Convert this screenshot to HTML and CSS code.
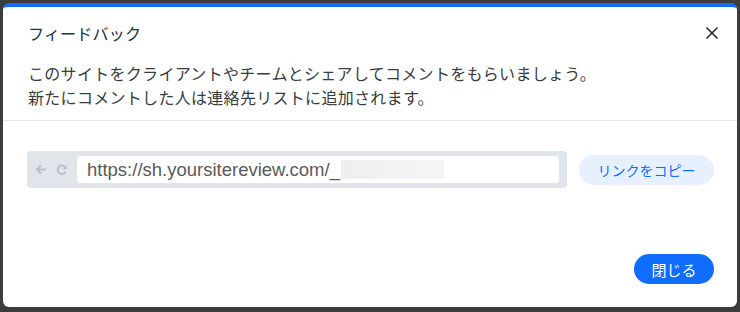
FILE: index.html
```html
<!DOCTYPE html>
<html lang="ja">
<head>
<meta charset="utf-8">
<link rel="stylesheet" href="styles.css">
</head>
<body>
<div class="dialog">
  <div class="header">
    <div class="title-row">
      <h1 class="title">フィードバック</h1>
      <button class="close" aria-label="閉じる">
        <svg width="14" height="14" viewBox="0 0 14 14"><path d="M1.5 1.5 L12.5 12.5 M12.5 1.5 L1.5 12.5" stroke="#222" stroke-width="1.5" fill="none"/></svg>
      </button>
    </div>
    <p class="desc">このサイトをクライアントやチームとシェアしてコメントをもらいましょう。<br>新たにコメントした人は連絡先リストに追加されます。</p>
  </div>
  <div class="content">
    <div class="browser">
      <div class="nav">
        <svg width="12" height="11" viewBox="0 0 12 11"><path d="M11 5.5 H2.5 M6 1.5 L2 5.5 L6 9.5" stroke="#b7c1cb" stroke-width="2.2" fill="none"/></svg>
        <svg width="12" height="12" viewBox="0 0 12 12"><path d="M9.6 7.6 A4.2 4.2 0 1 1 9.4 3.6" stroke="#b7c1cb" stroke-width="2" fill="none"/><path d="M10.8 1 L10.8 5.2 L6.8 5.2 Z" fill="#b7c1cb"/></svg>
      </div>
      <div class="url">https://sh.yoursitereview.com/_<span class="blur"></span></div>
    </div>
    <button class="copy">リンクをコピー</button>
  </div>
  <div class="footer">
    <button class="done">閉じる</button>
  </div>
</div>
</body>
</html>
```
FILE: styles.css
```css
html, body {
  margin: 0;
  padding: 0;
}
body {
  background: #3d3d3e;
  width: 740px;
  height: 312px;
  padding: 3px 3px 5px 3px;
  box-sizing: border-box;
  font-family: "Noto Sans CJK JP", "Noto Sans", sans-serif;
}
.dialog {
  background: #fff;
  border-top: 4px solid #116dff;
  border-radius: 6px;
  height: 304px;
  box-sizing: border-box;
  display: flex;
  flex-direction: column;
}
.header {
  padding: 14px 18px 11px 25px;
  border-bottom: 1px solid #dfe5eb;
}
.title-row {
  display: flex;
  align-items: center;
  justify-content: space-between;
}
.title {
  margin: 0;
  font-size: 16px;
  font-weight: 400;
  line-height: 24px;
  color: #20303c;
  letter-spacing: 0.2px;
}
.close {
  border: 0;
  background: none;
  padding: 0;
  width: 14px;
  height: 14px;
  display: flex;
}
.desc {
  margin: 16px 0 0 0;
  font-size: 16px;
  line-height: 24px;
  color: #383c40;
  letter-spacing: 0.3px;
}
.content {
  display: flex;
  align-items: center;
  padding: 30px 23px 0 24px;
  gap: 12px;
}
.browser {
  width: 540px;
  height: 37px;
  background: #dfe5eb;
  border-radius: 4px;
  display: flex;
  align-items: center;
  box-sizing: border-box;
  padding: 0 8px 0 8px;
}
.nav {
  display: flex;
  align-items: center;
  gap: 9px;
  width: 42px;
}
.url {
  flex: 1;
  height: 27px;
  background: #fff;
  border-radius: 4px;
  display: flex;
  align-items: center;
  padding-left: 10px;
  font-family: "Liberation Sans", Arial, sans-serif;
  font-size: 18.5px;
  color: #5a5a5a;
}
.blur {
  display: inline-block;
  width: 103px;
  height: 19px;
  margin-left: 1px;
  background: linear-gradient(90deg, #eeeff1, #f4f5f6);
}
.copy {
  border: 0;
  background: #e7f0ff;
  color: #116dff;
  border-radius: 15px;
  width: 135px;
  height: 30px;
  font-family: "Noto Sans CJK JP", sans-serif;
  font-size: 14px;
  padding: 0;
}
.footer {
  margin-top: auto;
  display: flex;
  justify-content: flex-end;
  padding: 0 23px 23px 0;
}
.done {
  border: 0;
  background: #116dff;
  color: #fff;
  border-radius: 15px;
  width: 80px;
  height: 30px;
  font-family: "Noto Sans CJK JP", sans-serif;
  font-size: 15px;
  padding: 0;
}
```
